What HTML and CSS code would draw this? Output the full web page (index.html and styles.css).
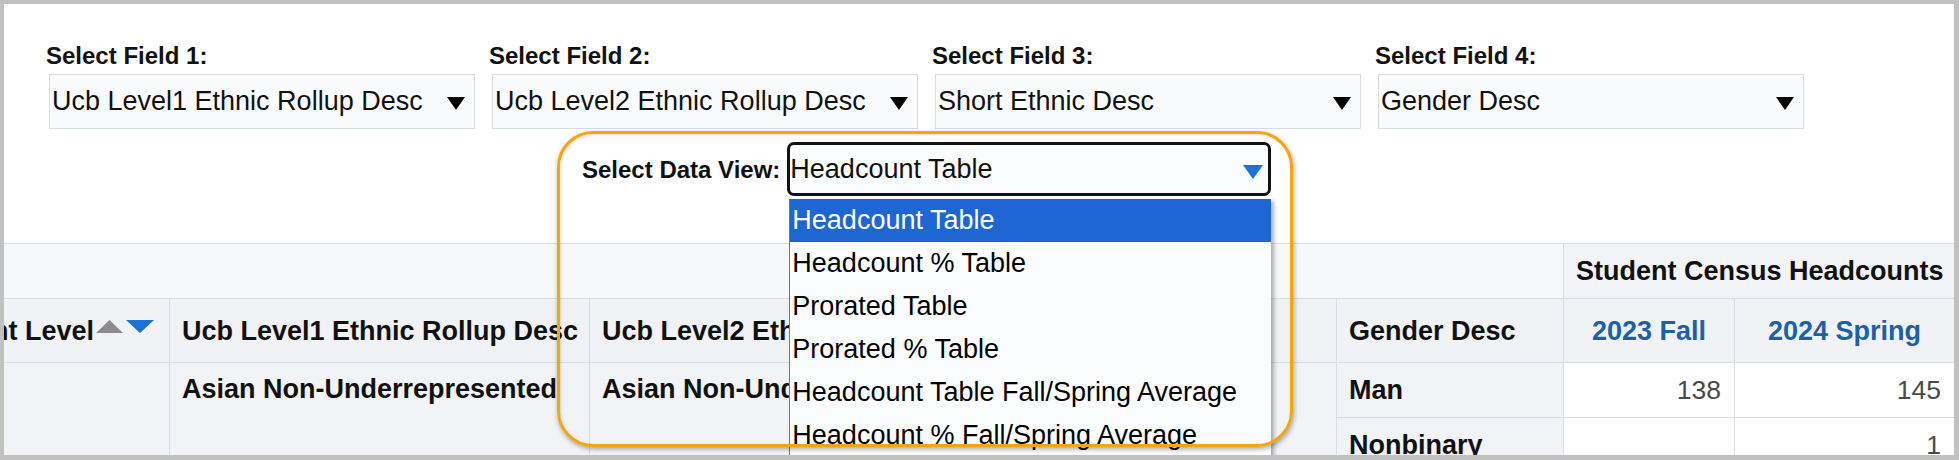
FILE: index.html
```html
<!DOCTYPE html>
<html lang="en">
<head>
<meta charset="utf-8">
<title>Student Census Headcounts</title>
<link rel="stylesheet" href="styles.css">
</head>
<body>
<div class="frame">
  <div class="fields">
    <div class="field">
      <div class="label">Select Field 1:</div>
      <div class="select"><span>Ucb Level1 Ethnic Rollup Desc</span><svg class="caret" viewBox="0 0 18 13"><polygon points="0,0 18,0 9,13" fill="#000"/></svg></div>
    </div>
    <div class="field">
      <div class="label">Select Field 2:</div>
      <div class="select"><span>Ucb Level2 Ethnic Rollup Desc</span><svg class="caret" viewBox="0 0 18 13"><polygon points="0,0 18,0 9,13" fill="#000"/></svg></div>
    </div>
    <div class="field">
      <div class="label">Select Field 3:</div>
      <div class="select"><span>Short Ethnic Desc</span><svg class="caret" viewBox="0 0 18 13"><polygon points="0,0 18,0 9,13" fill="#000"/></svg></div>
    </div>
    <div class="field">
      <div class="label">Select Field 4:</div>
      <div class="select"><span>Gender Desc</span><svg class="caret" viewBox="0 0 18 13"><polygon points="0,0 18,0 9,13" fill="#000"/></svg></div>
    </div>
  </div>

  <div class="dataview">
    <div class="label dv-label">Select Data View:</div>
    <div class="dv-select">
      <span>Headcount Table</span>
      <svg class="dv-caret" viewBox="0 0 20 14"><polygon points="0,0 20,0 10,14" fill="#1b73d6"/></svg>
      <ul class="listbox">
        <li class="selected">Headcount Table</li>
        <li>Headcount % Table</li>
        <li>Prorated Table</li>
        <li>Prorated % Table</li>
        <li>Headcount Table Fall/Spring Average</li>
        <li>Headcount % Fall/Spring Average</li>
      </ul>
    </div>
  </div>

  <div class="table-wrap">
    <table class="pivot">
      <colgroup>
        <col class="c-a"><col class="c-b"><col class="c-c"><col class="c-d"><col class="c-e"><col class="c-f"><col class="c-g">
      </colgroup>
      <tr class="r-super">
        <td colspan="5" class="blank"></td>
        <th colspan="2" class="super">Student Census Headcounts</th>
      </tr>
      <tr class="r-head">
        <th class="hdr">Student Level<svg class="sort" viewBox="0 0 58 13"><polygon points="0,13 13.5,0 27,13" fill="#8c8c8c"/><polygon points="30,0 58,0 44,13" fill="#1b73d6"/></svg></th>
        <th class="hdr">Ucb Level1 Ethnic Rollup Desc</th>
        <th class="hdr">Ucb Level2 Ethnic Rollup Desc</th>
        <th class="hdr">Short Ethnic Desc</th>
        <th class="hdr">Gender Desc</th>
        <th class="hdr term">2023 Fall</th>
        <th class="hdr term">2024 Spring</th>
      </tr>
      <tr class="r-data">
        <th rowspan="2" class="rh top"></th>
        <th rowspan="2" class="rh top">Asian Non-Underrepresented</th>
        <th rowspan="2" class="rh top">Asian Non-Underrepresented</th>
        <th rowspan="2" class="rh top">Chinese</th>
        <th class="rh">Man</th>
        <td class="num">138</td>
        <td class="num">145</td>
      </tr>
      <tr class="r-data">
        <th class="rh">Nonbinary</th>
        <td class="num"></td>
        <td class="num">1</td>
      </tr>
    </table>
  </div>

  <div class="highlight"></div>
</div>
</body>
</html>
```

FILE: styles.css
```css
* {
  box-sizing: border-box;
}

body {
  margin: 0;
  font-family: "Liberation Sans", Arial, sans-serif;
  color: #111;
}

.frame {
  position: relative;
  width: 1959px;
  height: 460px;
  border-style: solid;
  border-color: #c1c1c1;
  border-width: 4px 5px 5px 4px;
  background: #ffffff;
  overflow: hidden;
}

/* ---- field selectors ---- */
.fields {
  display: flex;
  gap: 14px;
  padding: 38px 0 0 42px;
}

.field {
  width: 429px;
}

.label {
  font-weight: 700;
  font-size: 24px;
  line-height: 27px;
  color: #111;
  white-space: nowrap;
}

.select {
  margin: 5px 0 0 3px;
  width: 426px;
  height: 55px;
  border: 1px solid #d6dee4;
  background: #f9fbfd;
  display: flex;
  align-items: center;
  justify-content: space-between;
  padding: 0 9px 0 2px;
  font-size: 27px;
  color: #111;
  white-space: nowrap;
}

.caret {
  width: 18px;
  height: 13px;
  margin-top: 3px;
  flex: none;
}

/* ---- data view ---- */
.dataview {
  display: flex;
  align-items: center;
  margin: 13px 0 0 578px;
}

.dv-label {
  margin-right: 7px;
}

.dv-select {
  position: relative;
  width: 484px;
  height: 54px;
  border: 3px solid #121212;
  border-radius: 7px;
  background: #fbfcfe;
  display: flex;
  align-items: center;
  justify-content: space-between;
  padding: 0 5px 0 0;
  font-size: 27px;
  color: #111;
}

.dv-caret {
  width: 20px;
  height: 14px;
  margin-top: 6px;
  flex: none;
}

.listbox {
  position: absolute;
  top: 54px;
  left: -1px;
  width: 482px;
  margin: 0;
  padding: 0;
  list-style: none;
  background: #fbfcfe;
  border-left: 1px solid #7a7a7a;
  box-shadow: 3px 2px 4px rgba(0, 0, 0, 0.3);
  z-index: 5;
}

.listbox li {
  height: 43px;
  line-height: 43px;
  padding-left: 2px;
  font-size: 27px;
  color: #000;
  white-space: nowrap;
}

.listbox li.selected {
  background: #1e66d2;
  color: #fff;
}

/* ---- pivot table ---- */
.table-wrap {
  margin-top: 47px;
}

.pivot {
  border-collapse: collapse;
  table-layout: fixed;
  width: 2050px;
  margin-left: -100px;
  font-size: 27px;
  font-weight: 700;
  color: #111;
}

.c-a { width: 265px; }
.c-b { width: 420px; }
.c-c { width: 416px; }
.c-d { width: 331px; }
.c-e { width: 227px; }
.c-f { width: 171px; }
.c-g { width: 220px; }

.pivot th,
.pivot td {
  border: 1px solid #d6dee6;
  padding: 0 12px;
  white-space: nowrap;
  overflow: hidden;
  text-align: left;
  vertical-align: middle;
  line-height: 30px;
}

.r-super { height: 55px; }
.r-head { height: 64px; }
.r-data { height: 55px; }

.pivot .blank {
  background: #f6f8fa;
}

.pivot .super {
  background: #f1f3f6;
  text-align: center;
}

.pivot .hdr {
  background: #f0f2f5;
}

.pivot .term {
  text-align: center;
  color: #1f5fa8;
}

.sort {
  width: 58px;
  height: 13px;
  margin-left: 2px;
  vertical-align: 7px;
}

.pivot .rh {
  background: #f1f3f6;
}

.pivot .top {
  vertical-align: top;
  padding-top: 11px;
}

.pivot .num {
  background: #ffffff;
  text-align: right;
  padding-right: 13px;
  font-weight: 400;
  font-size: 26.5px;
  color: #4a4a4a;
}

/* ---- annotation highlight ---- */
.highlight {
  position: absolute;
  left: 553px;
  top: 127px;
  width: 736px;
  height: 316px;
  border: 3px solid #f5a60a;
  border-radius: 36px;
  box-shadow: 1px 2px 5px rgba(0, 0, 0, 0.35), inset 1px 1px 3px rgba(0, 0, 0, 0.15);
  z-index: 10;
  pointer-events: none;
}
```
